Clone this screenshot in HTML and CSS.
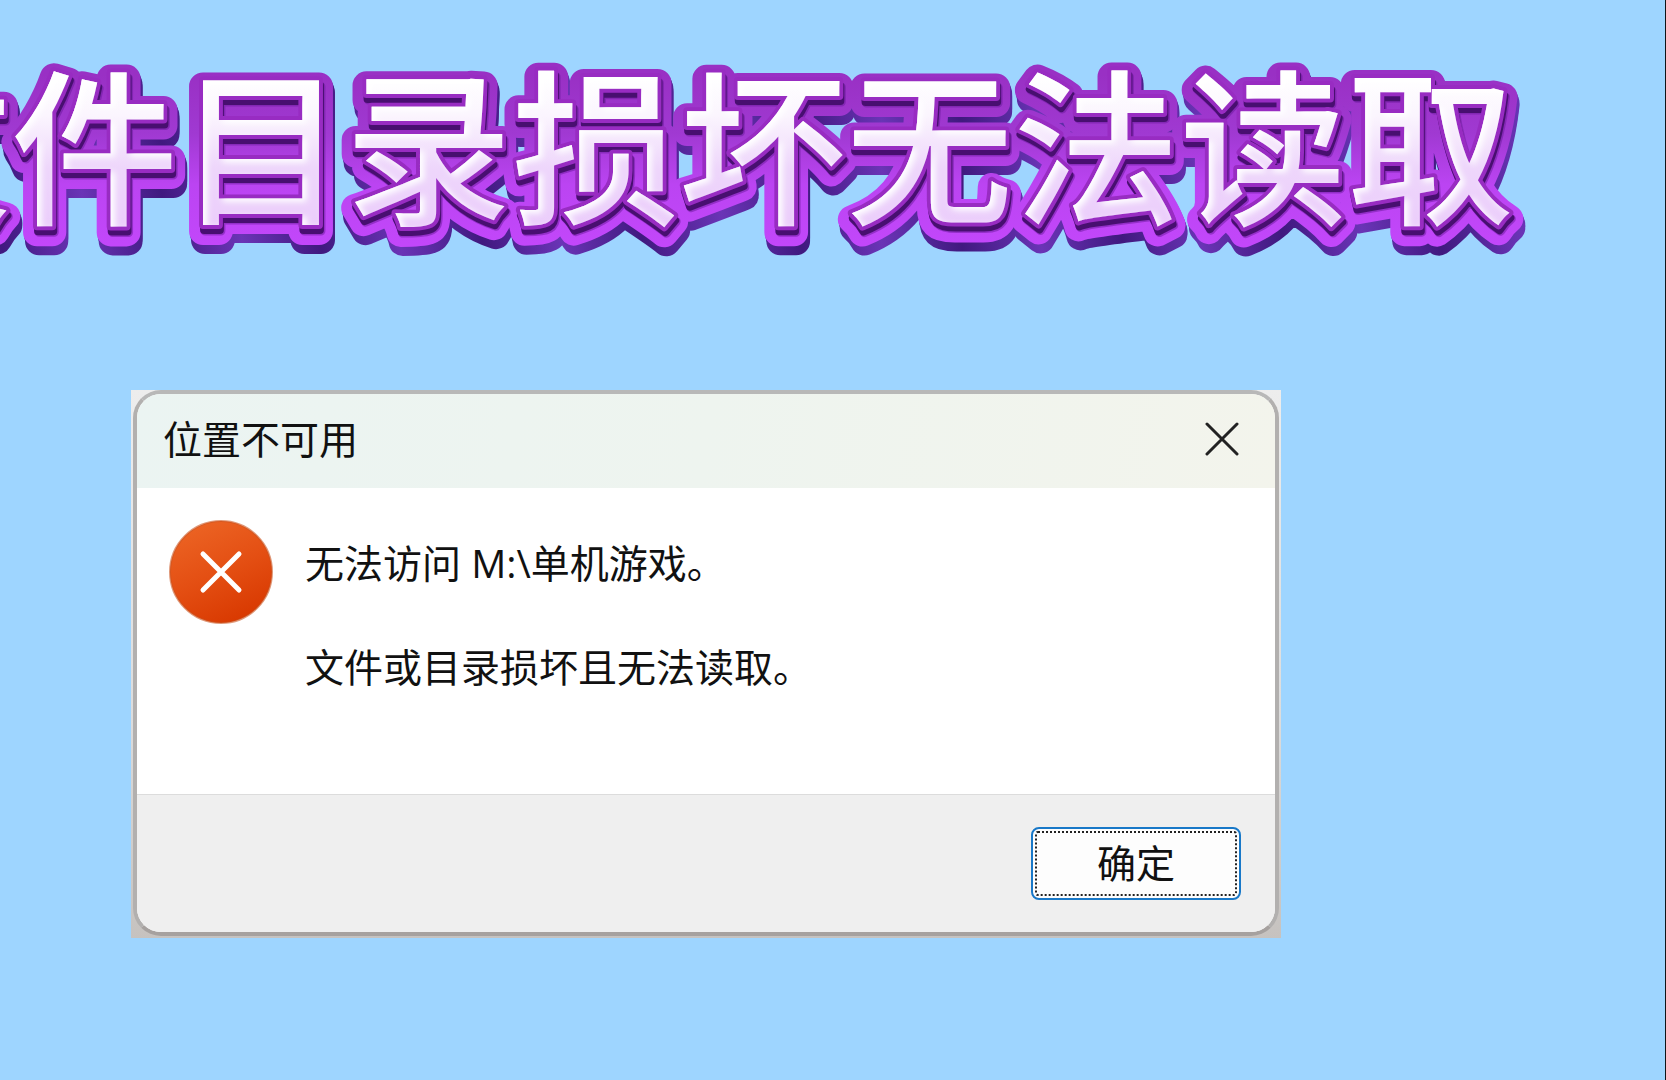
FILE: index.html
```html
<!DOCTYPE html>
<html lang="zh-CN">
<head>
    <meta charset="UTF-8">
    <meta name="viewport" content="width=device-width, initial-scale=1.0">
    <title>文件目录损坏无法读取</title>
    <link rel="stylesheet" href="styles.css">
</head>
<body>
    <h1 class="banner">
        <svg class="bannerArt" role="img" aria-label="文件目录损坏无法读取">
            <defs>
                <linearGradient id="faceFill" gradientUnits="userSpaceOnUse" x1="0" y1="30" x2="0" y2="180">
                    <stop offset="0" stop-color="#ffffff"/>
                    <stop offset="0.25" stop-color="#fbf5fe"/>
                    <stop offset="0.6" stop-color="#eed6fb"/>
                    <stop offset="1" stop-color="#ebcdfb"/>
                </linearGradient>
                <linearGradient id="outlineFill" gradientUnits="userSpaceOnUse" x1="0" y1="20" x2="0" y2="190">
                    <stop offset="0" stop-color="#9930c4"/>
                    <stop offset="0.35" stop-color="#a039d2"/>
                    <stop offset="0.65" stop-color="#bb44f2"/>
                    <stop offset="1" stop-color="#c247fa"/>
                </linearGradient>
                <linearGradient id="sideFill" gradientUnits="userSpaceOnUse" x1="0" y1="0" x2="80" y2="0" spreadMethod="reflect">
                    <stop offset="0" stop-color="#40197f"/>
                    <stop offset="1" stop-color="#6a34b6"/>
                </linearGradient>
                <!-- white light on the upper left edges of the letters -->
                <filter id="edgeLight" x="-5%" y="-10%" width="110%" height="120%">
                    <feOffset in="SourceAlpha" dx="4" dy="3" result="moved"/>
                    <feGaussianBlur in="moved" stdDeviation="3" result="soft"/>
                    <feFlood flood-color="#ffffff" result="white"/>
                    <feComposite in="white" in2="soft" operator="out" result="light"/>
                    <feComposite in="light" in2="SourceAlpha" operator="in" result="rim"/>
                    <feMerge>
                        <feMergeNode in="SourceGraphic"/>
                        <feMergeNode in="rim"/>
                    </feMerge>
                </filter>
            </defs>
            <g aria-hidden="true">
                <use class="side" href="#bannerText" x="2" y="15"/>
                <use class="side" href="#bannerText" x="2" y="12"/>
                <use class="side" href="#bannerText" x="1" y="9"/>
                <use class="outline" href="#bannerText" y="6"/>
                <use class="innerShade" href="#bannerText" x="2" y="6"/>
                <use class="innerDark" href="#bannerText" x="1" y="5"/>
                <use class="innerLine" href="#bannerText"/>
            </g>
            <g class="face">
                <text id="bannerText" x="100%" y="164" text-anchor="end">文件目录损坏无法读取</text>
            </g>
        </svg>
    </h1>

    <div class="frame">
        <section class="dialog" role="alertdialog" aria-labelledby="dialogTitle" aria-describedby="dialogText">
            <header class="titleBar">
                <h2 id="dialogTitle">位置不可用</h2>
                <button class="closeButton" type="button" aria-label="关闭">
                    <svg width="34" height="34" viewBox="0 0 34 34">
                        <path d="M2 2L32 32M32 2L2 32"/>
                    </svg>
                </button>
            </header>
            <div class="content">
                <svg class="errorIcon" width="104" height="104" viewBox="0 0 104 104" aria-hidden="true">
                    <defs>
                        <linearGradient id="errorFill" x1="0.25" y1="0" x2="0.7" y2="1">
                            <stop offset="0" stop-color="#ec6424"/>
                            <stop offset="0.5" stop-color="#e44f13"/>
                            <stop offset="1" stop-color="#d83800"/>
                        </linearGradient>
                    </defs>
                    <circle cx="52" cy="52" r="51" fill="url(#errorFill)" stroke="#c9541f" stroke-width="2" stroke-opacity="0.6"/>
                    <path d="M34 34L70 70M70 34L34 70" stroke="#fff" stroke-width="5" stroke-linecap="round"/>
                </svg>
                <div class="message" id="dialogText">
                    <p>无法访问 M:\单机游戏。</p>
                    <p>文件或目录损坏且无法读取。</p>
                </div>
            </div>
            <footer class="actions">
                <button class="okButton" type="button"><span>确定</span></button>
            </footer>
        </section>
    </div>
</body>
</html>
```

FILE: styles.css
```css
* {
    margin: 0;
    padding: 0;
    box-sizing: border-box;
}

body {
    min-height: 100vh;
    background-color: #9ed5ff;
    border-right: 1px solid #101418;
    font-family: "Open Sans", "Noto Sans CJK SC", sans-serif;
    color: #111;
    overflow-x: hidden;
}

.banner {
    padding: 48px 151px 0 0;
}

.bannerArt {
    display: block;
    width: 100%;
    height: 220px;
    overflow: visible;
    font-family: "Noto Sans CJK SC", sans-serif;
    font-size: 167px;
    font-weight: 500;
    stroke-linejoin: round;
}

.side {
    fill: url(#sideFill);
    stroke: url(#sideFill);
    stroke-width: 28px;
}

.outline {
    fill: url(#outlineFill);
    stroke: url(#outlineFill);
    stroke-width: 28px;
}

.innerShade {
    fill: #6a1a9c;
    stroke: #6a1a9c;
    stroke-width: 9px;
    opacity: 0.5;
}

.innerDark {
    fill: #480f70;
    stroke: #480f70;
    stroke-width: 8px;
}

.innerLine {
    fill: #982cc2;
    stroke: #982cc2;
    stroke-width: 8px;
}

.face {
    fill: url(#faceFill);
    filter: url(#edgeLight);
}

.frame {
    margin: 122px 384px 0 131px;
    padding: 0 2px 2px;
    background: linear-gradient(#ededed, #dcdcdc 60%, #c6c2bf);
}

.dialog {
    border: 4px solid #b2b0af;
    border-top-color: #b8b8b8;
    border-bottom-color: #a6a19f;
    border-radius: 28px;
    background-color: #fff;
    overflow: hidden;
}

.titleBar {
    display: flex;
    align-items: center;
    justify-content: space-between;
    height: 94px;
    padding: 0 26px 4px;
    background: linear-gradient(100deg, #ebf4f2, #eef4ef 50%, #f3f4ec);
}

.titleBar h2 {
    font-size: 39px;
    font-weight: 400;
    line-height: 52px;
}

.closeButton {
    display: flex;
    padding: 10px;
    border: none;
    background: none;
    cursor: pointer;
}

.closeButton path {
    stroke: #222;
    stroke-width: 3px;
    stroke-linecap: round;
}

.content {
    display: flex;
    gap: 32px;
    min-height: 306px;
    padding: 32px;
}

.errorIcon {
    flex: none;
}

.errorIcon path {
    fill: none;
}

.message {
    display: flex;
    flex-direction: column;
    gap: 52px;
    padding-top: 17px;
    font-size: 39px;
    line-height: 52px;
}

.actions {
    display: flex;
    justify-content: flex-end;
    padding: 32px 34px;
    border-top: 1px solid #dcdcdc;
    background-color: #efefef;
}

.okButton {
    width: 210px;
    height: 73px;
    padding: 2px;
    border: 2px solid #1878c8;
    border-radius: 8px;
    background-color: #fdfdfd;
    color: #111;
    font-family: inherit;
    font-size: 39px;
    line-height: 52px;
    cursor: pointer;
}

.okButton span {
    display: flex;
    align-items: center;
    justify-content: center;
    height: 100%;
    padding-bottom: 2px;
    border: 2px dotted #222;
    border-radius: 3px;
}
```
